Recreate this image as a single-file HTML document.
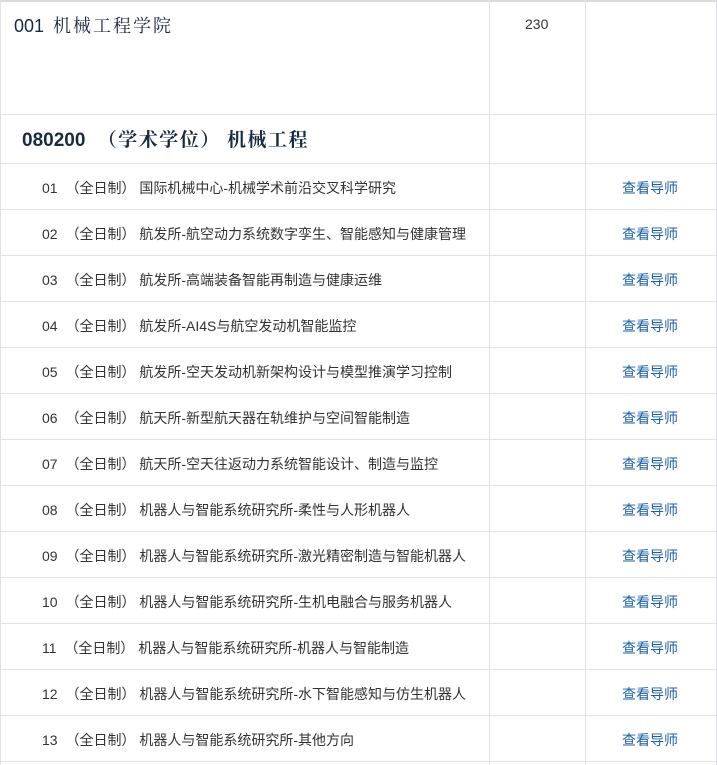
<!DOCTYPE html>
<html><head><meta charset="utf-8"><style>
*{margin:0;padding:0;box-sizing:border-box}
body{width:717px;height:765px;background:#fff;position:relative;overflow:hidden;font-family:"Liberation Sans","Noto Sans CJK SC",sans-serif}
.h{position:absolute;left:0;width:717px;height:1px;background:#e1e1e6}
.v{position:absolute;top:0;width:1px;height:765px;background:#e1e1e6}
.t{position:absolute;white-space:pre;line-height:1}
.r{font-size:14px;color:#333;left:42px}
.r b{font-weight:normal;margin-left:4px}
.l{font-size:14px;color:#1a5fa8;left:622px}
.s{font-family:"Noto Serif CJK SC","AR PL UKai CN",serif}
</style></head><body>
<div class="h" style="top:0;height:2px;background:#dcdcdf"></div>
<div class="v" style="left:0"></div>
<div class="v" style="left:489px"></div>
<div class="v" style="left:585px"></div>
<div class="v" style="left:716px"></div>
<div class="h" style="top:114px"></div>
<div class="h" style="top:163px"></div>
<div class="t" style="left:14px;top:16px;font-size:18px;color:#1a2a40">001 <span class="s" style="letter-spacing:2px;margin-left:4px">机械工程学院</span></div>
<div class="t" style="left:525px;top:17px;font-size:14px;color:#333">230</div>
<div class="t" style="left:22px;top:129px;font-size:19px;color:#1a2a40;font-weight:bold">080200 <span class="s" style="font-weight:bold;letter-spacing:1.5px;margin-left:7px">（学术学位） 机械工程</span></div>
<div id="rows"></div>
<script>
var d=["国际机械中心-机械学术前沿交叉科学研究","航发所-航空动力系统数字孪生、智能感知与健康管理","航发所-高端装备智能再制造与健康运维","航发所-AI4S与航空发动机智能监控","航发所-空天发动机新架构设计与模型推演学习控制","航天所-新型航天器在轨维护与空间智能制造","航天所-空天往返动力系统智能设计、制造与监控","机器人与智能系统研究所-柔性与人形机器人","机器人与智能系统研究所-激光精密制造与智能机器人","机器人与智能系统研究所-生机电融合与服务机器人","机器人与智能系统研究所-机器人与智能制造","机器人与智能系统研究所-水下智能感知与仿生机器人","机器人与智能系统研究所-其他方向"];
var h="";
for(var i=0;i<d.length;i++){var y=163+46*i;var n=(i<9?"0":"")+(i+1);
h+='<div class="t r" style="top:'+(y+18)+'px">'+n+'<b> （全日制） </b>'+d[i]+'</div>';
h+='<div class="t l" style="top:'+(y+18)+'px">查看导师</div>';
h+='<div class="h" style="top:'+(y+46)+'px"></div>';}
document.getElementById("rows").innerHTML=h;
</script>
</body></html>
